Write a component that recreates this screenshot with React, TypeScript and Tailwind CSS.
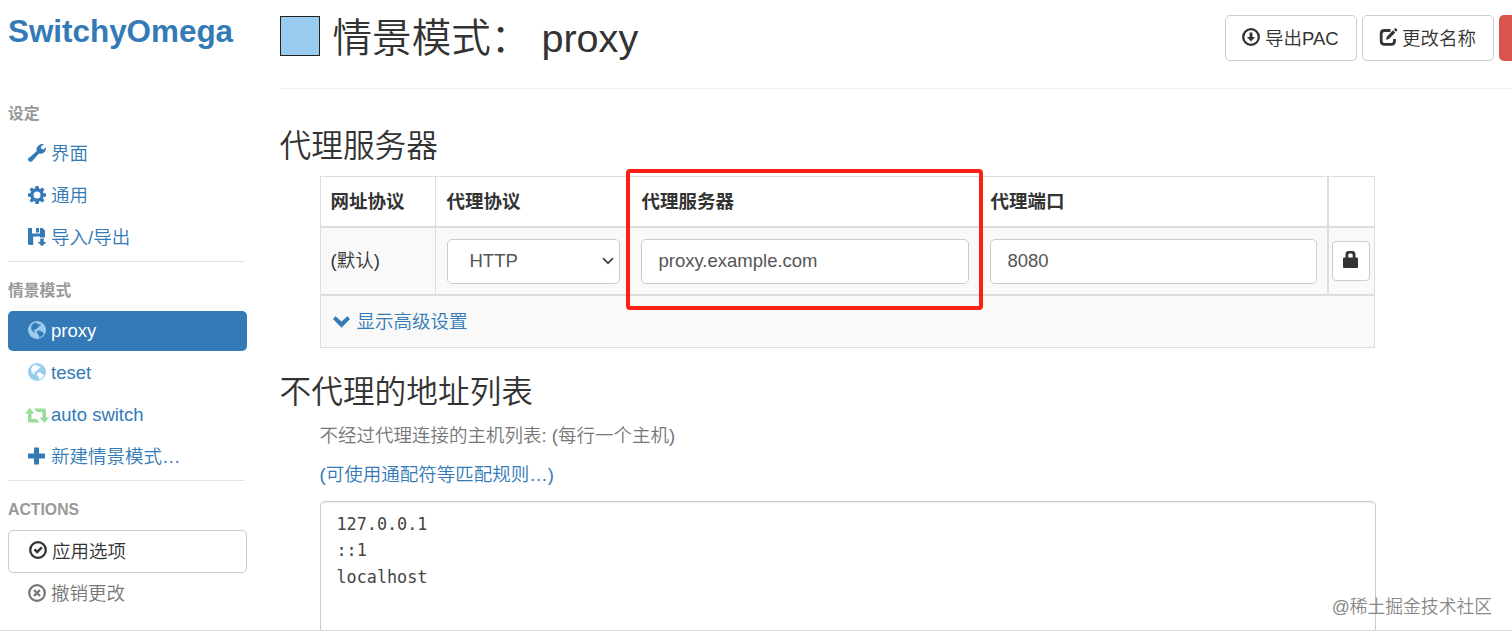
import type { ReactNode } from 'react';

type IconProps = { className?: string };

function Glyph({ className = '', children }: IconProps & { children: ReactNode }) {
  return (
    <svg viewBox="0 0 18 18" fill="currentColor" className={`h-[18px] w-[18px] shrink-0 ${className}`}>
      {children}
    </svg>
  );
}

function WrenchIcon() {
  return (
    <Glyph>
      <path d="M.6 14.200 8.600 7.200C8 4.800 9 2.500 10.900 1.200 12.200.2 14.200-.2 16 .2L13 2.600 13.300 4.700 15.400 5.400 18 3.200C18.100 5.200 17.300 7.600 15.700 8.700 14.200 9.700 12.400 9.900 11 9.400L4.100 17.200C3.200 18.100 1.800 18.100.8 17.100 0 16.200-.3 15-.6 14.200Z" />
    </Glyph>
  );
}

function CogIcon() {
  return (
    <Glyph>
      <path
        fillRule="evenodd"
        d="M7.5 0h3l.5 2.6 1.2.5L14.4 1.600l2 2L14.900 5.800l.5 1.200L18 7.500v3l-2.600.5-.5 1.200 1.500 2.200-2 2-2.200-1.500-1.200.5L10.500 18h-3L7 15.400l-1.200-.5-2.200 1.500-2-2 1.500-2.200-.5-1.200L0 10.500v-3L2.600 7l.5-1.200L1.600 3.600l2-2 2.200 1.500L7 2.600ZM9 5.500a3.500 3.500 0 1 0 0 7 3.500 3.500 0 0 0 0-7Z"
      />
    </Glyph>
  );
}

function FloppySaveIcon() {
  return (
    <Glyph>
      <path d="M0 0H4V5.500H12V0H14.500L17 2.500V9.500H12V8.500H5.200V17H1L0 16ZM8 0H11V4.500H8ZM12.200 10.500H15.800V14H18.500L14 18.200 9.500 14H12.200Z" />
    </Glyph>
  );
}

function GlobeIcon({ className, land }: IconProps & { land: string }) {
  return (
    <Glyph className={className}>
      <circle cx="9" cy="9" r="9" />
      <path
        className={land}
        d="M4.200 3.500 6.500 2 9.500 1.700 8.800 3 10.500 3.600 12.300 2.800 12.600 4.500 11 5 10.500 6.500 8.800 7.200 8 8.800 6 8.600 5.600 10 7.400 10.800 7 11.500 5 10.700 3.300 8.400 3.200 5.500ZM9.300 9.800 12 9.500 14.800 11.200 16 12.400 14.200 15 11.500 16.600 10.800 14 9 12.200Z"
      />
    </Glyph>
  );
}

function RetweetIcon({ className = '' }: IconProps) {
  return (
    <svg viewBox="0 0 24 15" fill="currentColor" className={`h-[15px] w-6 shrink-0 ${className}`}>
      <path d="M4.700 0 9.400 5.400H6.500V11H11.500L14.500 14.500H4.500Q3 14.500 3 13V5.400H0ZM9 .5H19.500Q21 .5 21 2V9.500H24L19.300 15 14.600 9.500H17.500V4H12Z" />
    </svg>
  );
}

function PlusIcon() {
  return (
    <Glyph>
      <path d="M6.500.5h4q.5 0 .5.500V6.500H16.500q.5 0 .5.500v4q0 .500-.5.500h-5.500V17q0 .500-.5.500H6.500q-.5 0-.5-.500v-5.500H.5q-.5 0-.5-.500V7q0-.500.5-.500h5.500V1q0-.500.5-.500Z" />
    </Glyph>
  );
}

function OkCircleIcon() {
  return (
    <Glyph>
      <circle cx="9" cy="9" r="7.800" fill="none" stroke="currentColor" strokeWidth="2.300" />
      <path d="M4.600 9.200 6.300 7.500 8.200 9.300 12 5.500 13.700 7.200 8.200 12.800Z" />
    </Glyph>
  );
}

function RemoveCircleIcon() {
  return (
    <Glyph>
      <circle cx="9" cy="9" r="7.800" fill="none" stroke="currentColor" strokeWidth="2.300" />
      <path d="m6 6 6 6m0-6-6 6" fill="none" stroke="currentColor" strokeWidth="2.300" />
    </Glyph>
  );
}

function DownloadIcon() {
  return (
    <Glyph>
      <circle cx="9" cy="9" r="7.800" fill="none" stroke="currentColor" strokeWidth="2.300" />
      <path d="M7.600 4.500h2.800V9H13L9 13.500 5 9h2.600Z" />
    </Glyph>
  );
}

function EditIcon() {
  return (
    <Glyph className="w-[19px]">
      <path
        d="M11 2.500H5Q1.700 2.500 1.700 5.500V13Q1.700 16.300 5 16.300H11.800Q15 16.300 15 13V11"
        fill="none"
        stroke="currentColor"
        strokeWidth="2.800"
      />
      <path d="M7.200 8.700 13.500 2.300 15.800 4.600 9.500 11 6.500 11.700ZM14.300 1.500 15.300.5Q16 0 16.700.6L17.600 1.500Q18.100 2.200 17.600 2.800L16.600 3.800Z" />
    </Glyph>
  );
}

function LockIcon() {
  return (
    <svg viewBox="0 0 15 17" fill="currentColor" className="h-[17px] w-[15px]">
      <path d="M0 7.500q0-1 1-1H2.500V3.500Q2.500 0 5.500 0H9.500q3 0 3 3.500V6.500H14q1 0 1 1v8.500q0 1-1 1H1q-1 0-1-1ZM5.300 6.500h4.400V4Q9.700 2.500 8.500 2.500h-2Q5.300 2.500 5.300 4Z" />
    </svg>
  );
}

function ChevronIcon() {
  return (
    <svg viewBox="0 0 17 12" fill="currentColor" className="h-3 w-[17px] shrink-0">
      <path d="M2.500.3 8.500 5.500 14.500.3 17 3.100 8.500 11.700 0 3.100Z" />
    </svg>
  );
}

function NavItem({ icon, label, active = false }: { icon: ReactNode; label: string; active?: boolean }) {
  return (
    <a
      className={`mb-[2px] flex h-10 w-[239px] items-center rounded-[5px] ${
        active ? 'bg-[#337ab7] text-white' : 'text-[#337ab7]'
      }`}
    >
      <span className="-mt-[3px] ml-[17px] flex w-6 justify-center">{icon}</span>
      <span className="ml-[2px]">{label}</span>
    </a>
  );
}

function SectionLabel({ children }: { children: ReactNode }) {
  return <div className="text-[15.8px] leading-[22px] font-bold text-[#999]">{children}</div>;
}

function Sidebar() {
  return (
    <aside className="w-[279.5px] shrink-0 pl-2">
      <div className="h-[103px] pt-[10px] text-[31.4px] leading-[44px] font-bold text-[#337ab7]">SwitchyOmega</div>

      <SectionLabel>设定</SectionLabel>
      <nav className="w-[237px] border-b border-[#e2e2e2] pt-[9px] pb-px">
        <NavItem icon={<WrenchIcon />} label="界面" />
        <NavItem icon={<CogIcon />} label="通用" />
        <NavItem icon={<FloppySaveIcon />} label="导入/导出" />
      </nav>

      <div className="pt-[18px]">
        <SectionLabel>情景模式</SectionLabel>
      </div>
      <nav className="w-[237px] border-b border-[#e2e2e2] pt-[9px] pb-px">
        <NavItem active icon={<GlobeIcon className="text-[#99ccee]" land="fill-[#337ab7]" />} label="proxy" />
        <NavItem icon={<GlobeIcon className="text-[#99ccee]" land="fill-white" />} label="teset" />
        <NavItem icon={<RetweetIcon className="mt-[3px] text-[#99dd99]" />} label="auto switch" />
        <NavItem icon={<PlusIcon />} label="新建情景模式…" />
      </nav>

      <div className="pt-[18px]">
        <SectionLabel>ACTIONS</SectionLabel>
      </div>
      <button className="mt-[9px] flex h-[43px] w-[239px] items-center rounded-[5px] border border-[#ccc] text-[#333]">
        <span className="-mt-[3px] ml-5">
          <OkCircleIcon />
        </span>
        <span className="ml-[5px]">应用选项</span>
      </button>
      <a className="flex h-[42px] items-center text-[#777]">
        <span className="-mt-[2px] ml-5">
          <RemoveCircleIcon />
        </span>
        <span className="ml-[5px]">撤销更改</span>
      </a>
    </aside>
  );
}

function Header() {
  return (
    <header className="flex h-[89px] items-start border-b border-[#eee] text-[#333]">
      <span className="mt-4 h-10 w-10 border border-[#222] bg-[#99ccee]" />
      <h1 className="ml-[13px] pt-[10px] text-[39.6px] leading-[56px] whitespace-pre">情景模式： proxy</h1>
      <div className="mt-[15px] mr-[-35px] ml-auto flex shrink-0 gap-[5px]">
        <button className="flex h-[46px] w-[132px] items-center rounded-[5px] border border-[#ccc] pl-4">
          <span className="-mt-[3px]">
            <DownloadIcon />
          </span>
          <span className="ml-[5px] pt-px">导出PAC</span>
        </button>
        <button className="flex h-[46px] w-[132px] items-center rounded-[5px] border border-[#ccc] pl-4">
          <span className="-mt-[3px]">
            <EditIcon />
          </span>
          <span className="ml-[4px] pt-px">更改名称</span>
        </button>
        <button className="h-[46px] w-12 rounded-[5px] bg-[#d9534f]" />
      </div>
    </header>
  );
}

function ProxyTable() {
  return (
    <div className="relative mt-[8px] ml-10 w-[1055px] border border-[#ddd]">
      <div className="flex h-[51px] items-center border-b-2 border-[#ddd] font-bold text-[#333]">
        <div className="flex h-full w-[115px] items-center border-r border-[#ddd] pl-[10px]">网址协议</div>
        <div className="w-[195px] pl-[11px]">代理协议</div>
        <div className="w-[349px] pl-[11px]">代理服务器</div>
        <div className="flex h-full flex-1 items-center border-r-2 border-[#ddd] pl-[11px]">代理端口</div>
        <div className="w-[45px]" />
      </div>
      <div className="flex h-[68px] items-center border-b-2 border-[#ddd] bg-[#f9f9f9] text-[#555]">
        <div className="flex h-full w-[115px] items-center border-r border-[#ddd] pl-[10px] text-[#333]">(默认)</div>
        <div className="w-[195px] pl-[11px]">
          <div className="flex h-[45px] w-[173px] items-center justify-between rounded-[5px] border border-[#ccc] bg-white pr-[5px] pl-[22px]">
            HTTP
            <svg viewBox="0 0 12 8" className="h-2 w-3" fill="none" stroke="#444" strokeWidth="1.700">
              <path d="m1 1.200 5 5 5-5" />
            </svg>
          </div>
        </div>
        <div className="w-[349px] pl-[10px]">
          <div className="flex h-[45px] w-[328px] items-center rounded-[5px] border border-[#ccc] bg-white pl-[17px]">
            proxy.example.com
          </div>
        </div>
        <div className="flex h-full flex-1 items-center border-r-2 border-[#ddd] pl-[10px]">
          <div className="flex h-[45px] w-[327px] items-center rounded-[5px] border border-[#ccc] bg-white pl-[17px]">
            8080
          </div>
        </div>
        <div className="w-[45px] pl-[3px]">
          <button className="flex h-10 w-[38px] items-center justify-center rounded-[4px] border border-[#ccc] bg-white pb-[3px] text-[#333]">
            <LockIcon />
          </button>
        </div>
      </div>
      <div className="flex h-[51px] items-center bg-[#f9f9f9] pl-3 text-[#337ab7]">
        <ChevronIcon />
        <span className="ml-[7px]">显示高级设置</span>
      </div>

      {/* highlight over the server column */}
      <div className="absolute top-[-8px] left-[305px] h-[141px] w-[357px] rounded-[4px] border-4 border-[#fc2013]" />
    </div>
  );
}

export default function App() {
  return (
    <div className="relative h-[636px] overflow-hidden bg-white font-['Liberation_Sans','Noto_Sans_CJK_SC',sans-serif] text-[18.5px] leading-[26px] font-[350]">
      <div className="flex h-[631px] overflow-hidden border-b border-[#ddd]">
        <Sidebar />
        <main className="min-w-0 flex-1">
          <Header />
          <h2 className="mt-[35px] text-[31.7px] leading-[44px] text-[#333]">代理服务器</h2>
          <ProxyTable />
          <h2 className="mt-[22px] text-[31.7px] leading-[44px] text-[#333]">不代理的地址列表</h2>
          <p className="mt-[9px] ml-10 text-[#777]">不经过代理连接的主机列表: (每行一个主机)</p>
          <p className="mt-[13px] ml-10 text-[#337ab7]">(可使用通配符等匹配规则…)</p>
          <div className="mt-[13px] ml-10 h-[200px] w-[1056px] rounded-[5px] border border-[#ccc] pt-[9px] pl-4 font-['DejaVu_Sans_Mono',monospace] text-[16.8px] leading-[26.4px] whitespace-pre text-[#444] shadow-[inset_0_1px_1px_rgba(0,0,0,0.075)]">
            {'127.0.0.1\n::1\nlocalhost'}
          </div>
        </main>
      </div>
      <div className="absolute right-5 bottom-4 text-[17.8px] text-[#888]">@稀土掘金技术社区</div>
    </div>
  );
}
